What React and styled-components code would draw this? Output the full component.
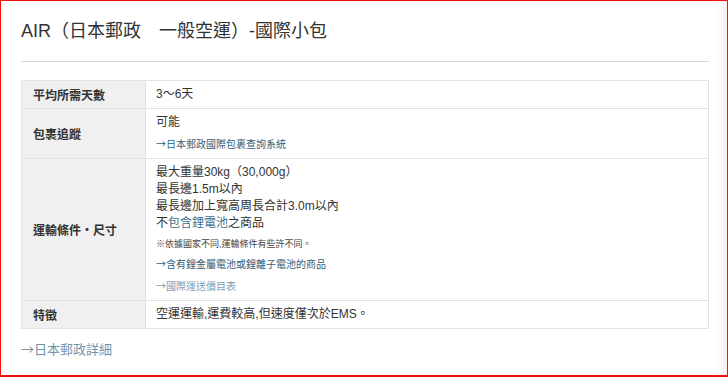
import React from "react";
import styled, { createGlobalStyle } from "styled-components";

const Global = createGlobalStyle`
  html, body { margin: 0; padding: 0; background: #fff; }
  body { font-family: "Liberation Sans", Arial, "Noto Sans CJK TC", sans-serif; color: #333; }
  * { box-sizing: border-box; }
`;

const Frame = styled.div`
  width: 728px;
  height: 377px;
  border: 1px solid #f21010;
  border-bottom-width: 2px;
  padding: 18px 18px 0 20px;
  box-shadow: inset -14px 0 10px -10px rgba(0, 0, 0, 0.07);
  overflow: hidden;
`;

const Title = styled.h1`
  margin: 0;
  font-size: 18px;
  line-height: 24px;
  font-weight: normal;
  color: #333;
  letter-spacing: 0;
`;

const Rule = styled.hr`
  margin: 18px 0 18px;
  border: 0;
  border-top: 1px solid #d6d6d6;
  height: 0;
`;

const Table = styled.table`
  width: 688px;
  border-collapse: collapse;
  font-size: 12px;
`;

const Label = styled.th`
  width: 124px;
  background: #f0f0f0;
  border: 1px solid #e2e2e2;
  text-align: left;
  vertical-align: middle;
  padding: 0 10px 0 11px;
  font-weight: bold;
  font-size: 12px;
  color: #333;
`;

const Value = styled.td`
  border: 1px solid #e2e2e2;
  padding: 5px 10px 5px 10px;
  vertical-align: top;
  color: #333;
`;

const Line = styled.div`
  line-height: 17px;
  font-size: 12px;
`;

const Blue = styled.span`
  color: #3d6e8e;
`;

const Note = styled.div`
  margin-top: 5px;
  font-size: 9px;
  line-height: 14px;
  color: #444;
`;

const SmallLink = styled.a`
  display: block;
  margin-top: 4px;
  font-size: 10px;
  line-height: 17px;
  color: ${(p) => (p.$visited ? "#7f9db4" : "#2f5f80")};
  text-decoration: none;
`;

const Arrow = styled.span`
  font-family: "Noto Sans CJK TC", sans-serif;
  color: ${(p) => p.$color || "inherit"};
`;

const FootLink = styled.a`
  display: block;
  margin-top: 11px;
  font-size: 13px;
  line-height: 17px;
  color: #7393ab;
  text-decoration: none;
`;

export default function App() {
  return (
    <>
      <Global />
      <Frame>
        <Title>AIR（日本郵政　一般空運）-國際小包</Title>
        <Rule />
        <Table>
          <tbody>
            <tr>
              <Label>平均所需天數</Label>
              <Value>
                <Line>3～6天</Line>
              </Value>
            </tr>
            <tr>
              <Label>包裹追蹤</Label>
              <Value>
                <Line>可能</Line>
                <SmallLink href="#">
                  <Arrow>→</Arrow>日本郵政國際包裹查詢系統
                </SmallLink>
              </Value>
            </tr>
            <tr>
              <Label>運輸條件・尺寸</Label>
              <Value>
                <Line>最大重量30kg（30,000g）</Line>
                <Line>最長邊1.5m以內</Line>
                <Line>最長邊加上寬高周長合計3.0m以內</Line>
                <Line>
                  不<Blue>包含鋰電池</Blue>之商品
                </Line>
                <Note>※依據國家不同,運輸條件有些許不同。</Note>
                <SmallLink href="#">
                  <Arrow>→</Arrow>含有鋰金屬電池或鋰離子電池的商品
                </SmallLink>
                <SmallLink href="#" $visited>
                  <Arrow>→</Arrow>國際運送價目表
                </SmallLink>
              </Value>
            </tr>
            <tr>
              <Label>特徵</Label>
              <Value>
                <Line>空運運輸,運費較高,但速度僅次於EMS。</Line>
              </Value>
            </tr>
          </tbody>
        </Table>
        <FootLink href="#">
          <Arrow $color="#8a8a8a">→</Arrow>日本郵政詳細
        </FootLink>
      </Frame>
    </>
  );
}
